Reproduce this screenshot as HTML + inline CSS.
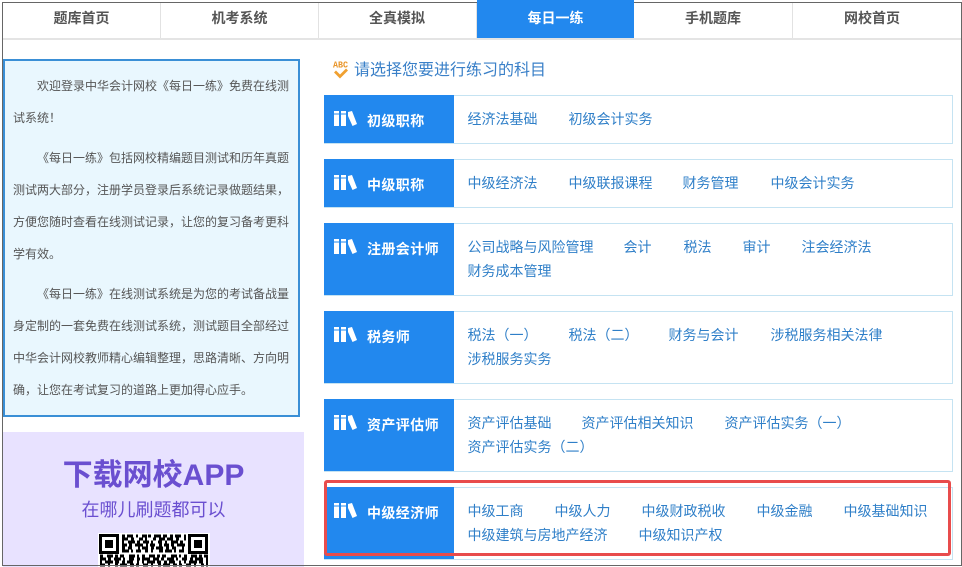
<!DOCTYPE html>
<html lang="zh"><head><meta charset="utf-8"><title>每日一练</title>
<style>
html,body{margin:0;padding:0;background:#fff}
body{position:relative;width:962px;height:567px;overflow:hidden;font-family:"Liberation Sans","Noto Sans CJK SC",sans-serif}
.a{position:absolute}
.frame{left:2px;top:2px;width:958px;height:562px;border:1px solid #666;z-index:5;pointer-events:none}
.navline{left:3px;top:38px;width:958px;height:2px;background:#e4e4e4}
.nav{top:3px;height:35px;line-height:31px;text-align:center;font-size:14px;font-weight:bold;color:#555;border-right:1px solid #e2e2e2;box-sizing:border-box}
.nav.on{background:#2288ee;color:#fff;border:0;top:0;height:38px;line-height:37px;z-index:6}
.side{left:3px;top:59px;width:297px;height:358px;box-sizing:border-box;border:2px solid #3a8fd6;background:#e9f7fe;color:#555;font-size:12px;line-height:32px;padding:9px 5px 0 8px}
.side p{margin:0 0 8px;text-indent:24px}
.app{left:3px;top:432px;width:301px;height:135px;background:#e8e2ff}
.t1{left:0;width:301px;top:23px;text-align:center;font-size:30px;font-weight:bold;color:#6a4fd0;line-height:42px}
.t2{left:0;width:301px;top:65px;text-align:center;font-size:18px;color:#6a4fd0;line-height:26px}
.h{left:354px;top:59px;font-size:16px;line-height:24px;color:#3a80c8;white-space:nowrap}
.row{left:324px;width:629px;box-sizing:border-box;border:1px solid #c5e3f2;background:#fff}
.lab{left:324px;width:130px;background:#2288ee;color:#fff}
.lab b{position:absolute;left:43px;top:14px;font-size:14px;line-height:24px;white-space:nowrap;letter-spacing:.4px}
.lab svg{position:absolute;left:10px;top:16px}
.l{position:absolute;font-size:14px;line-height:24px;color:#2f7fc8;white-space:nowrap;margin-left:-.5px}
.red{left:324px;top:480px;width:627px;height:76px;box-sizing:border-box;border:3px solid #e84c4c;border-radius:3px;z-index:4}
</style></head><body>
<div class="a frame"></div>
<div class="a nav" style="left:3px;width:158px">题库首页</div>
<div class="a nav" style="left:161px;width:158px">机考系统</div>
<div class="a nav" style="left:318px;width:159px">全真模拟</div>
<div class="a nav on" style="left:477px;width:157px">每日一练</div>
<div class="a nav" style="left:634px;width:159px">手机题库</div>
<div class="a nav" style="left:793px;width:158px;border:0">网校首页</div>
<div class="a navline"></div>

<div class="a side">
<p>欢迎登录中华会计网校《每日一练》免费在线测试系统！</p>
<p>《每日一练》包括网校精编题目测试和历年真题测试两大部分，注册学员登录后系统记录做题结果，方便您随时查看在线测试记录，让您的复习备考更科学有效。</p>
<p>《每日一练》在线测试系统是为您的考试备战量身定制的一套免费在线测试系统，测试题目全部经过中华会计网校教师精心编辑整理，思路清晰、方向明确，让您在考试复习的道路上更加得心应手。</p>
</div>

<div class="a app">
<div class="a t1">下载网校APP</div>
<div class="a t2">在哪儿刷题都可以</div>
<svg class="a" style="left:95px;top:101px" width="112" height="34" viewBox="0 0 112 34">
<rect width="112" height="34" fill="#fff"/>
<g fill="none" stroke="#000" stroke-width="3">
<path stroke-dasharray="3 2 6 3 2 4 5 1 3 3 7 2 4 3" d="M24 3H88"/>
<path stroke-dasharray="6 3 3 5 4 2 2 6 3 3 6 2" d="M24 6H88"/>
<path stroke-dasharray="2 4 7 2 3 3 6 2 2 5 4 3" d="M24 9H88"/>
<path stroke-dasharray="5 2 3 3 8 3 2 2 5 4 3 2" d="M24 12H88"/>
<path stroke-dasharray="3 3 4 6 2 2 6 3 3 2 7 3" d="M24 15H88"/>
<path stroke-dasharray="7 2 2 3 5 4 3 3 2 6 4 2" d="M24 18H88"/>
<path stroke-dasharray="3 4 6 2 3 2 4 5 6 2 2 3" d="M2 23H110"/>
<path stroke-dasharray="6 2 3 3 7 2 2 4 5 3 3 2 8 3" d="M2 26H110"/>
<path stroke-dasharray="2 3 8 2 4 3 3 2 6 4 2 3" d="M2 29H110"/>
<path stroke-dasharray="5 3 2 5 3 2 7 3 4 2 3 4" d="M2 32H110"/>
</g>
<g fill="none" stroke="#000" stroke-width="3">
<rect x="2.500" y="2.500" width="17" height="17"/><rect x="91.500" y="2.500" width="17" height="17"/>
</g>
<rect x="7" y="7" width="8" height="8"/><rect x="96" y="7" width="8" height="8"/>
</svg>
</div>

<svg class="a" style="left:332px;top:59px" width="18" height="21" viewBox="0 0 18 21">
<text x="1" y="8.500" font-size="9" font-weight="bold" fill="#e8952a" font-family="Liberation Mono" textLength="15" lengthAdjust="spacingAndGlyphs">ABC</text>
<path d="M3 12.500l5 5 7-7" fill="none" stroke="#f0a030" stroke-width="2.800"/>
</svg>
<div class="a h">请选择您要进行练习的科目</div>

<div class="a row" style="top:95px;height:49px"></div>
<div class="a lab" style="top:95px;height:48px"><svg width="23" height="15" viewBox="0 0 23 15"><path fill="#fff" d="M0 0h5v2.500H0zM0 3.500h5V15H0zM7 0h5v2.500H7zM7 3.500h5V15H7zM14 1l4-1 5 13-4.500 2L14 5z"/></svg><b>初级职称</b></div>
<span class="l" style="left:468px;top:107px">经济法基础</span><span class="l" style="left:569px;top:107px">初级会计实务</span>

<div class="a row" style="top:159px;height:49px"></div>
<div class="a lab" style="top:159px;height:48px"><svg width="23" height="15" viewBox="0 0 23 15"><path fill="#fff" d="M0 0h5v2.500H0zM0 3.500h5V15H0zM7 0h5v2.500H7zM7 3.500h5V15H7zM14 1l4-1 5 13-4.500 2L14 5z"/></svg><b>中级职称</b></div>
<span class="l" style="left:468px;top:171px">中级经济法</span><span class="l" style="left:569px;top:171px">中级联报课程</span><span class="l" style="left:683px;top:171px">财务管理</span><span class="l" style="left:771px;top:171px">中级会计实务</span>

<div class="a row" style="top:223px;height:73px"></div>
<div class="a lab" style="top:223px;height:72px"><svg width="23" height="15" viewBox="0 0 23 15"><path fill="#fff" d="M0 0h5v2.500H0zM0 3.500h5V15H0zM7 0h5v2.500H7zM7 3.500h5V15H7zM14 1l4-1 5 13-4.500 2L14 5z"/></svg><b>注册会计师</b></div>
<span class="l" style="left:468px;top:235px">公司战略与风险管理</span><span class="l" style="left:624px;top:235px">会计</span><span class="l" style="left:684px;top:235px">税法</span><span class="l" style="left:743px;top:235px">审计</span><span class="l" style="left:802px;top:235px">注会经济法</span>
<span class="l" style="left:468px;top:259px">财务成本管理</span>

<div class="a row" style="top:311px;height:73px"></div>
<div class="a lab" style="top:311px;height:72px"><svg width="23" height="15" viewBox="0 0 23 15"><path fill="#fff" d="M0 0h5v2.500H0zM0 3.500h5V15H0zM7 0h5v2.500H7zM7 3.500h5V15H7zM14 1l4-1 5 13-4.500 2L14 5z"/></svg><b>税务师</b></div>
<span class="l" style="left:468px;top:323px">税法（一）</span><span class="l" style="left:569px;top:323px">税法（二）</span><span class="l" style="left:669px;top:323px">财务与会计</span><span class="l" style="left:771px;top:323px">涉税服务相关法律</span>
<span class="l" style="left:468px;top:347px">涉税服务实务</span>

<div class="a row" style="top:399px;height:73px"></div>
<div class="a lab" style="top:399px;height:72px"><svg width="23" height="15" viewBox="0 0 23 15"><path fill="#fff" d="M0 0h5v2.500H0zM0 3.500h5V15H0zM7 0h5v2.500H7zM7 3.500h5V15H7zM14 1l4-1 5 13-4.500 2L14 5z"/></svg><b>资产评估师</b></div>
<span class="l" style="left:468px;top:411px">资产评估基础</span><span class="l" style="left:582px;top:411px">资产评估相关知识</span><span class="l" style="left:725px;top:411px">资产评估实务（一）</span>
<span class="l" style="left:468px;top:435px">资产评估实务（二）</span>

<div class="a row" style="top:487px;height:73px"></div>
<div class="a lab" style="top:487px;height:72px"><svg width="23" height="15" viewBox="0 0 23 15"><path fill="#fff" d="M0 0h5v2.500H0zM0 3.500h5V15H0zM7 0h5v2.500H7zM7 3.500h5V15H7zM14 1l4-1 5 13-4.500 2L14 5z"/></svg><b>中级经济师</b></div>
<span class="l" style="left:468px;top:499px">中级工商</span><span class="l" style="left:555px;top:499px">中级人力</span><span class="l" style="left:642px;top:499px">中级财政税收</span><span class="l" style="left:757px;top:499px">中级金融</span><span class="l" style="left:844px;top:499px">中级基础知识</span>
<span class="l" style="left:468px;top:523px">中级建筑与房地产经济</span><span class="l" style="left:639px;top:523px">中级知识产权</span>

<div class="a red"></div>
</body></html>
